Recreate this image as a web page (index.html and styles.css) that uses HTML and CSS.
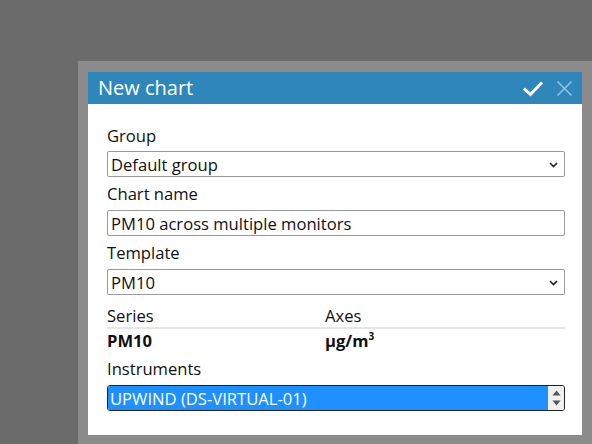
FILE: index.html
```html
<!DOCTYPE html>
<html>
<head>
<meta charset="utf-8">
<link rel="stylesheet" href="styles.css">
</head>
<body>
<div class="frame">
  <div class="dialog">
    <div class="titlebar">
      <span class="title">New chart</span>
      <div class="actions">
        <svg class="icon-check" width="20" height="16" viewBox="0 0 20 16"><path d="M2 8.5 L7.5 13.5 L18 2.5" fill="none" stroke="#ffffff" stroke-width="3" stroke-linecap="square"/></svg>
        <svg class="icon-close" width="17" height="17" viewBox="0 0 17 17"><path d="M1.5 1.5 L15.5 15.5 M15.5 1.5 L1.5 15.5" fill="none" stroke="#8ec2e3" stroke-width="1.6"/></svg>
      </div>
    </div>
    <div class="body">
      <div class="label">Group</div>
      <div class="field select"><span>Default group</span><svg class="chev" width="9" height="6" viewBox="0 0 9 6"><path d="M1 1 L4.5 4.5 L8 1" fill="none" stroke="#222" stroke-width="1.6"/></svg></div>
      <div class="label">Chart name</div>
      <div class="field"><span>PM10 across multiple monitors</span></div>
      <div class="label">Template</div>
      <div class="field select"><span>PM10</span><svg class="chev" width="9" height="6" viewBox="0 0 9 6"><path d="M1 1 L4.5 4.5 L8 1" fill="none" stroke="#222" stroke-width="1.6"/></svg></div>
      <div class="cols heads"><span class="col">Series</span><span class="col">Axes</span></div>
      <div class="cols vals"><span class="col">PM10</span><span class="col">µg/m<sup>3</sup></span></div>
      <div class="label">Instruments</div>
      <div class="listbox">
        <span class="selected">UPWIND (DS-VIRTUAL-01)</span>
        <div class="spinner">
          <svg width="9" height="6" viewBox="0 0 9 6"><path d="M0.5 5.5 L4.5 0.5 L8.5 5.5 Z" fill="#555"/></svg>
          <svg width="9" height="6" viewBox="0 0 9 6"><path d="M0.5 0.5 L4.5 5.5 L8.5 0.5 Z" fill="#555"/></svg>
        </div>
      </div>
    </div>
  </div>
</div>
</body>
</html>
```
FILE: styles.css
```css
html, body {
  margin: 0;
  padding: 0;
  height: 100%;
  background: #6b6b6b;
  overflow: hidden;
}
body {
  font-family: "Open Sans", "Noto Sans", sans-serif;
  color: #111;
}
.frame {
  box-sizing: border-box;
  margin: 61px 0 0 78px;
  padding: 11px 10px 0 10px;
  background: #8b8b8b;
  height: 383px;
}
.dialog {
  background: #ffffff;
  width: 494px;
}
.titlebar {
  height: 32px;
  background: #2e86bb;
  display: flex;
  align-items: center;
  padding: 0 9px 0 10px;
}
.title {
  color: #fff;
  font-size: 20px;
  flex: 1;
  line-height: 32px;
}
.actions {
  display: flex;
  align-items: center;
  gap: 13px;
}
.icon-check { margin-top: 2px; }
.body {
  padding: 21px 17px 24px 19px;
}
.label {
  font-size: 16.6px;
  line-height: 22px;
  margin: 6px 0 5px;
}
.body > .label:first-child { margin-top: 0; margin-bottom: 4px; }
.field {
  box-sizing: border-box;
  height: 26px;
  border: 1px solid #9a9a9a;
  border-radius: 2px;
  display: flex;
  align-items: center;
  padding: 1px 4px 0 3px;
  font-size: 16.6px;
}
.field span { flex: 1; }
.chev { margin-right: 2px; }
.cols {
  display: flex;
  font-size: 16.6px;
  line-height: 22px;
}
.col:first-child { width: 218px; }
.heads {
  margin-top: 10px;
  border-bottom: 2px solid #e6e6e6;
}
.vals {
  margin-top: 1px;
  font-weight: bold;
}
.vals sup {
  font-size: 10px;
  line-height: 0;
  vertical-align: 7px;
}
.listbox {
  box-sizing: border-box;
  height: 26px;
  border: 1px solid #222;
  border-radius: 3px;
  display: flex;
  overflow: hidden;
}
.selected {
  flex: 1;
  background: #1e90ff;
  color: #fff;
  font-size: 16.6px;
  line-height: 25px;
  padding-left: 2px;
}
.spinner {
  width: 16px;
  background: #f0f0f0;
  display: flex;
  flex-direction: column;
  align-items: center;
  justify-content: center;
  gap: 4px;
}
```
